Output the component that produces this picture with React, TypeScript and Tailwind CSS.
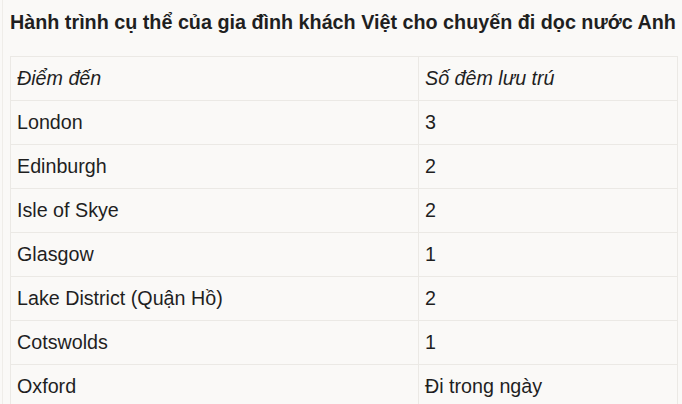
const rows: [string, string][] = [
  ['London', '3'],
  ['Edinburgh', '2'],
  ['Isle of Skye', '2'],
  ['Glasgow', '1'],
  ['Lake District (Quận Hồ)', '2'],
  ['Cotswolds', '1'],
  ['Oxford', 'Đi trong ngày'],
];

export default function App() {
  return (
    <div className="h-[404px] overflow-hidden bg-[#faf9f7] font-['Liberation_Sans',Arial,sans-serif] text-[#1f1f1f]">
      <div className="ml-[2px] h-full border-l border-[#efede9] pl-[7px] pr-[5px]">
        <h2 className="pt-[11px] text-[19.75px] leading-[23px] font-bold text-[#1f1f1f] whitespace-nowrap">
          Hành trình cụ thể của gia đình khách Việt cho chuyến đi dọc nước Anh
        </h2>
        <table className="mt-[22px] w-[668px] border-collapse text-[19.7px] leading-[23px]">
          <thead>
            <tr className="h-[44px]">
              <th className="w-[408px] border border-[#ebe9e5] pl-[6px] text-left font-normal italic">Điểm đến</th>
              <th className="border border-[#ebe9e5] pl-[6px] text-left font-normal italic">Số đêm lưu trú</th>
            </tr>
          </thead>
          <tbody>
            {rows.map(([place, nights]) => (
              <tr key={place} className="h-[44px]">
                <td className="border border-[#ebe9e5] pl-[6px]">{place}</td>
                <td className="border border-[#ebe9e5] pl-[6px]">{nights}</td>
              </tr>
            ))}
          </tbody>
        </table>
      </div>
    </div>
  );
}
